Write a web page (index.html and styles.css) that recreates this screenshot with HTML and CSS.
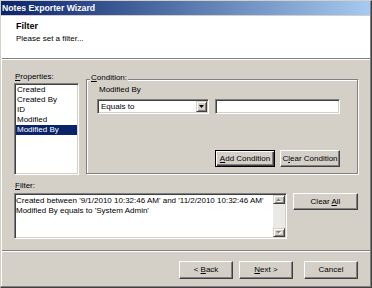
FILE: index.html
```html
<!DOCTYPE html>
<html>
<head>
<meta charset="utf-8">
<link rel="stylesheet" href="styles.css">
</head>
<body>
<div class="window">
  <div class="frame">
    <div class="titlebar">Notes Exporter Wizard</div>
    <div class="client">
      <div class="header">
        <div class="h-title">Filter</div>
        <div class="h-sub">Please set a filter...</div>
      </div>
      <div class="content">
        <div class="top-row">
          <div class="props">
            <div class="label"><u>P</u>roperties:</div>
            <div class="listbox">
              <div class="item">Created</div>
              <div class="item">Created By</div>
              <div class="item">ID</div>
              <div class="item">Modified</div>
              <div class="item selected">Modified By</div>
            </div>
          </div>
          <div class="group">
            <div class="legend"><u>C</u>ondition:</div>
            <div class="field-name">Modified By</div>
            <div class="cond-row">
              <div class="combo">
                <span class="combo-text">Equals to</span>
                <span class="combo-btn"><svg width="5" height="3" viewBox="0 0 5 3"><polygon points="0,0 5,0 2.5,3" fill="#000"/></svg></span>
              </div>
              <div class="textbox"></div>
            </div>
            <div class="cond-buttons">
              <button class="btn default btn-cond"><span><u>A</u>dd Condition</span></button>
              <button class="btn btn-cond"><span>C<u>l</u>ear Condition</span></button>
            </div>
          </div>
        </div>
        <div class="label filter-label"><u>F</u>ilter:</div>
        <div class="filter-row">
          <div class="filter-box">
            <div class="filter-text">Created between '9/1/2010 10:32:46 AM' and '11/2/2010 10:32:46 AM'<br>Modified By equals to 'System Admin'</div>
            <div class="scrollbar">
              <div class="sb-btn"><svg width="6" height="4" viewBox="0 0 6 4"><polygon points="1,4 6,4 3.5,1.5" fill="#fff"/><polygon points="0,3 5,3 2.5,0.5" fill="#808080"/></svg></div>
              <div class="sb-track"></div>
              <div class="sb-btn"><svg width="6" height="4" viewBox="0 0 6 4"><polygon points="1,1 6,1 3.5,3.5" fill="#fff"/><polygon points="0,0 5,0 2.5,2.5" fill="#808080"/></svg></div>
            </div>
          </div>
          <button class="btn btn-clear"><span>Clear <u>A</u>ll</span></button>
        </div>
      </div>
      <div class="sep"></div>
      <div class="footer">
        <button class="btn btn-nav"><span>&lt; <u>B</u>ack</span></button>
        <button class="btn btn-nav"><span><u>N</u>ext &gt;</span></button>
        <button class="btn btn-nav btn-cancel"><span>Cancel</span></button>
      </div>
    </div>
  </div>
</div>
</body>
</html>
```

FILE: styles.css
```css
* { box-sizing: border-box; }
html, body { margin: 0; padding: 0; }
body {
  width: 372px;
  height: 288px;
  overflow: hidden;
  background: #d4d0c8;
  font-family: "Liberation Sans", Arial, sans-serif;
  font-size: 8px;
  line-height: 10px;
  color: #000;
}
u { text-decoration: underline; text-underline-offset: 1px; }

.window {
  width: 372px;
  height: 288px;
  border-style: solid;
  border-width: 1px;
  border-color: #d4d0c8 #404040 #404040 #d4d0c8;
}
.frame {
  height: 100%;
  display: flex;
  flex-direction: column;
  border-right: 1px solid #808080;
  border-bottom: 1px solid #808080;
}
.titlebar {
  height: 14px;
  margin-bottom: 1px;
  padding-left: 1px;
  background: linear-gradient(to right, #0a246a, #a6caf0);
  color: #fff;
  font-weight: bold;
  font-size: 8.7px;
  line-height: 14px;
  white-space: nowrap;
  overflow: hidden;
}
.client {
  flex: 1;
  display: flex;
  flex-direction: column;
  border-left: 1px solid #fff;
}
.header {
  height: 43px;
  background: #fff;
  border-bottom: 1px solid #808080;
  padding: 5px 0 0 14px;
}
.h-title { font-weight: bold; font-size: 9px; line-height: 11px; }
.h-sub { margin-top: 2px; }

.content {
  border-top: 1px solid #fff;
  padding: 12px 12px 0 12px;
}
.top-row {
  display: flex;
  align-items: flex-start;
  gap: 7px;
}
.props { width: 65px; }
.label { padding-left: 1px; white-space: nowrap; }

.listbox {
  margin-top: 1px;
  height: 92px;
  background: #fff;
  border: 1px solid;
  border-color: #808080 #fff #fff #808080;
  box-shadow: inset 1px 1px #404040, inset -1px -1px #d4d0c8;
  padding: 1px;
}
.item {
  height: 10px;
  padding-left: 1px;
  white-space: nowrap;
}
.item.selected { background: #0a246a; color: #fff; }

.group {
  margin-top: 7px;
  width: 272px;
  height: 95px;
  border: 1px solid #808080;
  box-shadow: inset 1px 1px #fff, 1px 1px #fff;
  padding: 0 17px 0 10px;
  display: flex;
  flex-direction: column;
}
.legend {
  align-self: flex-start;
  margin: -7px 0 0 -7px;
  padding: 0 1px;
  background: #d4d0c8;
  white-space: nowrap;
}
.field-name { margin-top: 2px; padding-left: 2px; }
.cond-row {
  margin-top: 4px;
  display: flex;
  gap: 6px;
  height: 15px;
}
.combo, .textbox {
  height: 15px;
  background: #fff;
  border: 1px solid;
  border-color: #808080 #fff #fff #808080;
  box-shadow: inset 1px 1px #404040, inset -1px -1px #d4d0c8;
}
.combo {
  width: 112px;
  padding: 1px;
  display: flex;
  align-items: stretch;
}
.combo-text { flex: 1; padding-left: 2px; line-height: 11px; }
.combo-btn {
  width: 11px;
  background: #d4d0c8;
  border: 1px solid;
  border-color: #d4d0c8 #404040 #404040 #d4d0c8;
  box-shadow: inset 1px 1px #fff, inset -1px -1px #808080;
  display: flex;
  align-items: center;
  justify-content: center;
}
.combo-btn svg { display: block; }
.textbox { width: 125px; }

.cond-buttons {
  margin-top: 36px;
  display: flex;
  justify-content: flex-end;
  gap: 5px;
}
.btn {
  appearance: none;
  margin: 0;
  padding: 0;
  font: inherit;
  color: #000;
  background: #d4d0c8;
  border: 1px solid;
  border-color: #fff #404040 #404040 #fff;
  box-shadow: inset -1px -1px #808080;
  display: flex;
  align-items: center;
  justify-content: center;
  white-space: nowrap;
}
.btn.default {
  border-color: #000;
  box-shadow: inset 1px 1px #fff, inset -1px -1px #404040, inset -2px -2px #808080;
}
.btn-cond { width: 60px; height: 17px; }

.filter-label { margin-top: 6px; }
.filter-row {
  margin-top: 2px;
  display: flex;
  align-items: flex-start;
  gap: 6px;
}
.filter-box {
  width: 273px;
  height: 46px;
  background: #fff;
  border: 1px solid;
  border-color: #808080 #fff #fff #808080;
  box-shadow: inset 1px 1px #404040, inset -1px -1px #d4d0c8;
  padding: 1px;
  display: flex;
}
.filter-text {
  flex: 1;
  padding-top: 1px;
  white-space: nowrap;
  overflow: hidden;
}
.scrollbar {
  width: 12px;
  display: flex;
  flex-direction: column;
}
.sb-btn {
  height: 9px;
  background: #d4d0c8;
  border: 1px solid;
  border-color: #d4d0c8 #404040 #404040 #d4d0c8;
  box-shadow: inset 1px 1px #fff, inset -1px -1px #808080;
  display: flex;
  align-items: center;
  justify-content: center;
}
.sb-btn svg { display: block; }
.sb-track { flex: 1; background: #ebe9e5; }
.btn-clear { width: 65px; height: 17px; }

.sep {
  margin-top: 11px;
  height: 2px;
  border-top: 1px solid #808080;
  border-bottom: 1px solid #fff;
}
.footer {
  padding: 9px 12px 0 12px;
  display: flex;
  justify-content: flex-end;
  gap: 6px;
}
.btn-nav { width: 54px; height: 18px; }
.btn-cancel { margin-left: 5px; }
```
